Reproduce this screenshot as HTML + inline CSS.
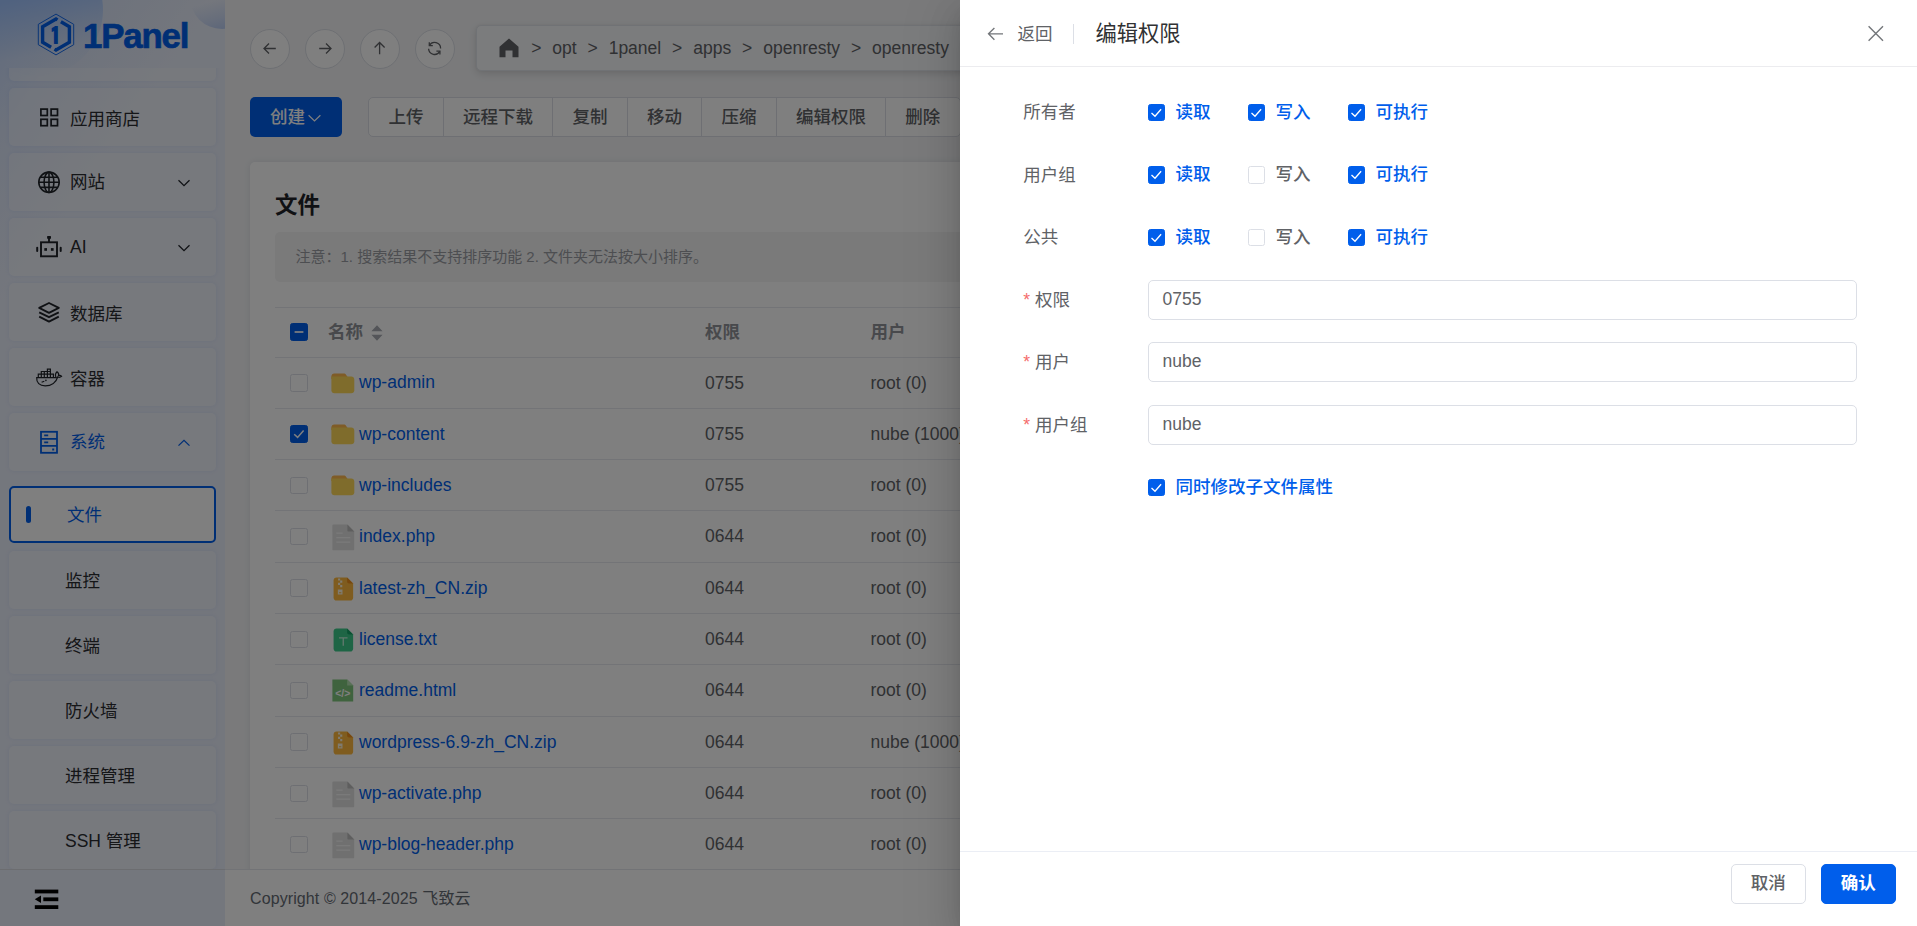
<!DOCTYPE html>
<html lang="zh-CN">
<head>
<meta charset="utf-8">
<title>1Panel - 文件</title>
<style>
*{box-sizing:border-box;}
html,body{margin:0;padding:0;}
body{width:1917px;height:926px;overflow:hidden;position:relative;background:#f4f5f7;
 font-family:"Liberation Sans","Noto Sans CJK SC",sans-serif;font-size:17.5px;color:#303133;}
.abs{position:absolute;}
/* ---------- sidebar ---------- */
#side{position:absolute;left:0;top:0;width:225px;height:926px;overflow:hidden;background:#e9eefa;}
#side .g1{position:absolute;left:-29px;top:-56px;width:132px;height:132px;border-radius:50%;
 background:linear-gradient(168deg,rgba(160,196,255,1) 40%,rgba(178,206,252,.85) 58%,rgba(205,221,250,.5) 78%,rgba(233,238,250,0) 97%);}
#side .g2{position:absolute;left:190px;top:-35px;width:64px;height:64px;border-radius:50%;
 background:linear-gradient(165deg,rgba(233,238,250,0) 52%,rgba(190,208,244,.6) 75%,rgba(168,192,240,.95) 100%);}
#side .g0{position:absolute;left:0;top:0;width:225px;height:300px;
 background:linear-gradient(125deg,rgba(176,204,252,.75) 0,rgba(205,220,248,.5) 22%,rgba(233,238,250,0) 50%);}
#logo{position:absolute;left:0;top:0;width:225px;height:68px;}
#logo .txt{position:absolute;left:82.5px;top:16.4px;font-weight:bold;font-size:35px;line-height:40px;color:#005eeb;
 letter-spacing:-1.2px;transform-origin:0 50%;transform:scaleX(.995);white-space:nowrap;-webkit-text-stroke:.7px #005eeb;}
#logo svg text{font-family:"IPAGothic","Liberation Sans",sans-serif;font-weight:bold;stroke:#005eeb;stroke-width:1.1px;}
#menu{position:absolute;left:0;top:68px;width:225px;height:801px;overflow:hidden;}
.mi{position:absolute;left:9px;width:207px;height:57.5px;border-radius:5px;background:rgba(255,255,255,.27);
 box-shadow:0 0 5px rgba(0,94,235,.08);font-size:17.5px;line-height:58px;color:#2b2d31;white-space:nowrap;}
.mi .ic{position:absolute;left:0;top:0;}
.mi .t{position:absolute;left:61px;top:0;}
.mi.sub .t{left:56px;top:.8px;}
.mi .ar{position:absolute;left:168px;top:24.6px;}
.mi.on{color:#005eeb;}
.mi.act{height:57.3px;background:#fff;border:2px solid #005eeb;color:#005eeb;box-shadow:none;}
.mi.act .t{left:56px;top:-1.6px;}
.mi.act .bar{position:absolute;left:15px;top:18px;width:5px;height:17px;border-radius:3px;background:#005eeb;}
#sfoot{position:absolute;left:0;top:869px;width:225px;height:57px;border-top:1px solid rgba(214,216,222,.9);}
/* ---------- main ---------- */
#main{position:absolute;left:225px;top:0;width:1692px;height:926px;overflow:hidden;}
.navb{position:absolute;top:29px;width:40px;height:40px;border-radius:50%;background:#fff;border:1px solid #dcdfe6;}
.navb svg{position:absolute;left:-1px;top:-1px;}
#crumb{position:absolute;left:251px;top:25px;width:1300px;height:46px;border-radius:5px;background:#f7f8fa;border:1px solid #e1e4ea;
 box-shadow:0 3px 8px rgba(0,0,0,.13),0 0 3px rgba(0,0,0,.05);}
.bc{position:absolute;left:54.2px;top:.5px;height:43.5px;display:flex;gap:10.9px;align-items:center;font-size:17.5px;color:#606266;white-space:nowrap;line-height:43.5px;}
.pbtn{position:absolute;height:40px;border:0;border-radius:5px;background:#005eeb;color:#fff;font:inherit;font-size:17.5px;font-weight:500;padding:0;text-align:center;line-height:40px;}
.bgrp{position:absolute;height:40px;display:flex;white-space:nowrap;}
.bgrp .b{display:block;height:40px;border:1px solid #dcdfe6;background:#fff;color:#606266;font-size:17.5px;font-weight:500;text-align:center;line-height:38px;margin-right:-1px;flex:none;}
.bgrp .b:first-child{border-radius:5px 0 0 5px;}
.bgrp .b:last-child{border-radius:0 5px 5px 0;}
#card{position:absolute;left:25px;top:161.5px;width:1642px;height:760px;background:#fff;border-radius:5px;box-shadow:0 0 7px rgba(0,20,60,.09);}
#card h3{position:absolute;left:25px;top:27px;margin:0;font-size:22.5px;line-height:34px;font-weight:bold;color:#1f2329;}
#alert{position:absolute;left:25px;top:70.5px;width:1592px;height:50px;border-radius:5px;background:#f4f4f5;color:#9a9da3;font-size:15px;line-height:49px;padding-left:20.5px;white-space:nowrap;}
#tbl{position:absolute;left:25px;top:145px;width:1592px;height:640px;border-top:1px solid #e6e8ef;font-size:17.5px;}
.th,.tr{position:absolute;left:0;width:1592px;border-bottom:1px solid #e6e8ef;white-space:nowrap;}
.th{top:0;height:50px;line-height:49px;color:#909399;}
.th b{position:absolute;top:0;font-weight:bold;}
.tr{height:51.33px;line-height:50px;color:#606266;}
.cb{position:absolute;left:15px;top:16.5px;width:17.5px;height:17.5px;border:1px solid #dcdfe6;border-radius:2.5px;background:#fff;}
.th .cb{top:15.5px;}
.cb.on{background:#005eeb;border-color:#005eeb;}
.cb svg{position:absolute;left:-1px;top:-1px;}
.fi{position:absolute;}
.nm{position:absolute;left:84px;top:0;color:#005eeb;}
.c2{position:absolute;left:430px;top:0;}
.c3{position:absolute;left:595.5px;top:0;}
.c4{position:absolute;left:800px;top:0;}
.c5{position:absolute;left:1000px;top:0;}
#foot{position:absolute;left:0;top:869px;width:1692px;height:57px;background:#fff;border-top:1px solid #e4e7ed;padding-left:25px;font-size:16px;line-height:57.6px;color:#646a73;letter-spacing:.1px;white-space:nowrap;}
/* ---------- overlay + drawer ---------- */
#ovl{position:absolute;left:0;top:0;width:1917px;height:926px;background:rgba(0,0,0,.5);}
#drawer{position:absolute;left:960px;top:0;width:957px;height:926px;background:#fff;
 box-shadow:0 16px 48px 16px rgba(0,0,0,.08),0 12px 32px rgba(0,0,0,.12),0 8px 16px -8px rgba(0,0,0,.16);}
#dh{position:absolute;left:0;top:0;width:957px;height:67px;border-bottom:1px solid #ececef;white-space:nowrap;}
#dh .back{position:absolute;left:57.5px;top:14px;font-size:17.5px;line-height:40px;color:#606266;}
#dh .dv{position:absolute;left:113px;top:24px;width:1px;height:20px;background:#dcdfe6;}
#dh .ttl{position:absolute;left:135.5px;top:13.6px;font-size:21.25px;line-height:40px;color:#303133;}
#df{position:absolute;left:0;top:0;width:957px;margin:0;}
.fr{position:absolute;left:0;width:957px;height:40px;line-height:40px;font-size:17.5px;color:#606266;white-space:nowrap;}
.fl{position:absolute;left:63.3px;top:-0.5px;}
.fl i{font-style:normal;color:#f56c6c;margin-right:5px;}
.ck{position:absolute;top:0;height:40px;display:block;color:#606266;font-weight:500;}
.ck .bx{position:absolute;left:0;top:11.5px;width:17px;height:17px;border:1px solid #dcdfe6;border-radius:2.5px;background:#fff;}
.ck .bx svg{position:absolute;left:-1px;top:-1px;}
#df .fr:nth-child(2) .bx{top:11px;height:17.6px;}
.ck .lb{position:absolute;left:27.4px;top:-1px;}
.ck.on{color:#005eeb;}
.ck.on .bx{background:#005eeb;border-color:#005eeb;}
.inp{position:absolute;left:188px;top:0;width:709px;height:40px;border:1px solid #dcdfe6;border-radius:5px;padding-left:13.5px;line-height:36.4px;color:#606266;background:#fff;}
#dfo{position:absolute;left:0;top:851px;width:957px;height:75px;border-top:1px solid #ebeef5;}
.btn{position:absolute;left:771px;top:11.7px;width:74.5px;height:40px;border:1px solid #dcdfe6;border-radius:5px;background:#fff;color:#606266;font-size:17.5px;font-weight:500;text-align:center;line-height:37px;}
.btn.pri{left:861px;background:#005eeb;border-color:#005eeb;color:#fff;font-weight:bold;}
</style>
</head>
<body>
<div id="app">
<!-- ================= SIDEBAR ================= -->
<aside id="side">
 <i class="g0"></i><i class="g1"></i><i class="g2"></i>
 <div id="logo">
  <svg class="abs" style="left:36px;top:12px" width="40" height="45" viewBox="-20 -22.5 40 45">
   <polygon points="0,-20.4 17.7,-10.2 17.7,10.2 0,20.4 -17.7,10.2 -17.7,-10.2" fill="none" stroke="#005eeb" stroke-width="0.9"/>
   <polyline points="1.5,-14.6 0,-15.5 -13.4,-7.75 -13.4,7.75 -4.9,12.7" fill="none" stroke="#005eeb" stroke-width="3.4" stroke-linejoin="miter"/>
   <polyline points="-1.5,14.6 0,15.5 13.4,7.75 13.4,-7.75 4.9,-12.7" fill="none" stroke="#005eeb" stroke-width="3.4" stroke-linejoin="miter"/>
   <text x="-0.6" y="9.3" text-anchor="middle" font-size="22" fill="#005eeb">1</text>
  </svg>
  <div class="txt">1Panel</div>
 </div>
 <nav id="menu">
  <div class="mi" style="top:-45px"></div>
  <div class="mi" style="top:20px">
   <svg class="ic" width="70" height="58" viewBox="0 0 70 58"><g fill="none" stroke="#1f2329" stroke-width="1.7">
    <rect x="31.9" y="21.1" width="6.4" height="6.4"/><rect x="42.1" y="21.1" width="6.4" height="6.4"/>
    <rect x="31.9" y="31.3" width="6.4" height="6.4"/><rect x="42.1" y="31.3" width="6.4" height="6.4"/></g></svg>
   <span class="t" style="top:1.6px">应用商店</span></div>
  <div class="mi" style="top:85px">
   <svg class="ic" width="70" height="58" viewBox="0 0 70 58"><g fill="none" stroke="#1f2329" stroke-width="1.6">
    <circle cx="40" cy="29.3" r="10.2"/><ellipse cx="40" cy="29.3" rx="4.9" ry="10.2"/>
    <path d="M40 19.1V39.5M29.8 29.3H50.2M31.3 24.2H48.7M31.3 34.4H48.7"/></g></svg>
   <span class="t">网站</span>
   <svg class="ar" width="14" height="10" viewBox="0 0 14 10"><path d="M1.5 2.3L7 7.6L12.5 2.3" fill="none" stroke="#1f2329" stroke-width="1.3"/></svg></div>
  <div class="mi" style="top:150px">
   <svg class="ic" width="70" height="58" viewBox="0 0 70 58"><g fill="none" stroke="#1f2329" stroke-width="1.9">
    <rect x="32.0" y="24.3" width="16" height="14"/><path d="M40 24.3V19.8"/></g>
    <g fill="#1f2329"><rect x="38.1" y="18.1" width="3.9" height="2.7" rx=".6"/><rect x="27.2" y="28.8" width="2" height="5.2" rx="1"/><rect x="50.7" y="28.8" width="2" height="5.2" rx="1"/>
    <rect x="35.3" y="30.1" width="2.7" height="2.7"/><rect x="41.9" y="30.1" width="2.7" height="2.7"/></g></svg>
   <span class="t">AI</span>
   <svg class="ar" width="14" height="10" viewBox="0 0 14 10"><path d="M1.5 2.3L7 7.6L12.5 2.3" fill="none" stroke="#1f2329" stroke-width="1.3"/></svg></div>
  <div class="mi" style="top:215px">
   <svg class="ic" width="70" height="58" viewBox="0 0 70 58"><g fill="none" stroke="#1f2329" stroke-width="1.9" stroke-linejoin="round">
    <path d="M40 20L49.8 24.9L40 29.8L30.2 24.9Z"/><path d="M30.2 29.3L40 34.2L49.8 29.3"/><path d="M30.2 33.7L40 38.6L49.8 33.7"/></g></svg>
   <span class="t" style="top:1.6px">数据库</span></div>
  <div class="mi" style="top:280px">
   <svg class="ic" width="70" height="58" viewBox="0 0 70 58"><g fill="none" stroke="#1f2329" stroke-width="1.2">
    <path d="M27.7 29.6H47.1C46.1 27.6 46.5 25.1 48 23.7C49.5 24.8 50 26.3 49.5 27.6C50.5 27.1 51.9 27.4 52.6 28.3C51.6 29.2 50 29.5 48.7 29C47.2 34.4 42.4 37.9 36.2 37.9C30.6 37.9 27.3 34.6 27.7 29.6Z"/>
    <path d="M29.3 29.4V26.1H44.4V29.4M32.3 29.4V23.5H41.4V29.4M35.3 29.4V23.5M38.4 29.4V21.2H41.4V23.5M32.6 34.3L35.3 33.2"/></g>
    <circle cx="36.9" cy="32.4" r=".8" fill="#1f2329"/></svg>
   <span class="t" style="top:1.6px">容器</span></div>
  <div class="mi on" style="top:345px">
   <svg class="ic" width="70" height="58" viewBox="0 0 70 58"><g fill="none" stroke="#005eeb" stroke-width="1.8">
    <rect x="32" y="18.8" width="16" height="21"/><path d="M32 25.8H48M32 32.8H48M35.2 22.4H39.2M35.2 29.4H39.2"/></g>
    <rect x="43.2" y="35.5" width="2" height="2" fill="#005eeb"/></svg>
   <span class="t">系统</span>
   <svg class="ar" width="14" height="10" viewBox="0 0 14 10"><path d="M1.5 7.6L7 2.3L12.5 7.6" fill="none" stroke="#005eeb" stroke-width="1.3"/></svg></div>
  <div class="mi sub act" style="top:418px"><i class="bar"></i><span class="t">文件</span></div>
  <div class="mi sub" style="top:483px"><span class="t">监控</span></div>
  <div class="mi sub" style="top:548px"><span class="t">终端</span></div>
  <div class="mi sub" style="top:613px"><span class="t">防火墙</span></div>
  <div class="mi sub" style="top:678px"><span class="t">进程管理</span></div>
  <div class="mi sub" style="top:743px"><span class="t">SSH 管理</span></div>
 </nav>
 <div id="sfoot">
  <svg class="abs" style="left:34px;top:19.2px" width="26" height="22" viewBox="0 0 26 22"><g fill="#000">
   <rect x="0.8" y="0.6" width="23.5" height="3.8"/><rect x="9.3" y="8.4" width="15" height="3.8"/><rect x="0.8" y="16.2" width="23.5" height="3.8"/>
   <path d="M0.8 10.3L7 6.6V14Z"/></g></svg>
 </div>
</aside>
<!-- ================= MAIN ================= -->
<main id="main">
 <div class="navb" style="left:25px"><svg width="40" height="40" viewBox="0 0 40 40"><path d="M25.8 19.5H14.1M19 14.5L14 19.5L19 24.5" fill="none" stroke="#606266" stroke-width="1.3"/></svg></div>
 <div class="navb" style="left:80px"><svg width="40" height="40" viewBox="0 0 40 40"><path d="M14.2 19.5H25.9M21 14.5L26 19.5L21 24.5" fill="none" stroke="#606266" stroke-width="1.3"/></svg></div>
 <div class="navb" style="left:135px"><svg width="40" height="40" viewBox="0 0 40 40"><path d="M19.6 25.3V13.6M14.6 18.5L19.6 13.5L24.6 18.5" fill="none" stroke="#606266" stroke-width="1.3"/></svg></div>
 <div class="navb" style="left:190px"><svg width="40" height="40" viewBox="0 0 40 40"><g fill="none" stroke="#606266" stroke-width="1.3"><path d="M14.4 16.4A6 6 0 0 1 25.6 19.4M13.6 19.8A6 6 0 0 0 24.8 22.4"/><path d="M14.3 13.2V16.7H17.8M24.9 25.6V22.1H21.4"/></g></svg></div>
 <div id="crumb">
  <svg class="abs" style="left:21px;top:11px" width="22" height="22" viewBox="0 0 22 22"><path d="M11 1.4L20.5 9.8V20.2H14.5V13.6H7.5V20.2H1.5V9.8Z" fill="#606266"/></svg>
  <div class="bc"><span>&gt;</span><span>opt</span><span>&gt;</span><span>1panel</span><span>&gt;</span><span>apps</span><span>&gt;</span><span>openresty</span><span>&gt;</span><span>openresty</span><span>&gt;</span><span>www</span><span>&gt;</span><span>sites</span><span>&gt;</span><span>nube.blog</span><span>&gt;</span><span>index</span></div>
 </div>
 <button class="pbtn" style="left:25px;top:97px;width:92px">创建<svg width="15" height="12" viewBox="0 0 15 12" style="margin-left:2px;vertical-align:-1px"><path d="M1.6 3.2L7.5 8.9L13.4 3.2" fill="none" stroke="#fff" stroke-width="1.2"/></svg></button>
 <div class="bgrp" style="left:143px;top:97px">
  <span class="b" style="width:76px">上传</span><span class="b" style="width:110px">远程下载</span><span class="b" style="width:76px">复制</span><span class="b" style="width:75px">移动</span><span class="b" style="width:76px">压缩</span><span class="b" style="width:110px">编辑权限</span><span class="b" style="width:75.5px">删除</span>
 </div>
 <section id="card">
  <h3>文件</h3>
  <div id="alert">注意：1. 搜索结果不支持排序功能 2. 文件夹无法按大小排序。</div>
  <div id="tbl">
   <div class="th"><span class="cb on"><svg width="18" height="18" viewBox="0 0 18 18"><path d="M4.6 9H13.4" stroke="#fff" stroke-width="1.7"/></svg></span>
    <b style="left:53px">名称</b><svg class="abs" style="left:95px;top:16px" width="14" height="18" viewBox="0 0 14 18"><path d="M7 1.2L12.6 7.2H1.4Z M7 16.8L12.6 10.8H1.4Z" fill="#a8abb2"/></svg>
    <b style="left:430px">权限</b><b style="left:595.5px">用户</b><b style="left:800px">用户组</b><b style="left:1000px">大小</b></div>
 <div class="tr" style="top:50.00px"><span class="cb"></span><svg class="fi fd" style="left:56px;top:15px" width="24" height="21" viewBox="0 0 24 21"><path d="M0.4 6V3.4C0.4 1.8 1.6 0.6 3.2 0.6H12.6C13.8 0.6 14.6 1.1 15.2 2L17 4.6V6Z" fill="#ffb84e"/><path d="M0.4 3.6H20.3C22 3.6 23.3 4.9 23.3 6.6V17.3C23.3 19 22 20.3 20.3 20.3H3.4C1.7 20.3 0.4 19 0.4 17.3Z" fill="#ffd858"/></svg><a class="nm" style="top:-1px">wp-admin</a><span class="c2">0755</span><span class="c3">root (0)</span><span class="c4">root (0)</span><span class="c5">-</span></div>
 <div class="tr" style="top:101.33px"><span class="cb on"><svg width="18" height="18" viewBox="0 0 18 18"><path d="M4.2 9.3L7.6 12.4L13.6 5.6" fill="none" stroke="#fff" stroke-width="1.5"/></svg></span><svg class="fi fd" style="left:56px;top:15px" width="24" height="21" viewBox="0 0 24 21"><path d="M0.4 6V3.4C0.4 1.8 1.6 0.6 3.2 0.6H12.6C13.8 0.6 14.6 1.1 15.2 2L17 4.6V6Z" fill="#ffb84e"/><path d="M0.4 3.6H20.3C22 3.6 23.3 4.9 23.3 6.6V17.3C23.3 19 22 20.3 20.3 20.3H3.4C1.7 20.3 0.4 19 0.4 17.3Z" fill="#ffd858"/></svg><a class="nm">wp-content</a><span class="c2">0755</span><span class="c3">nube (1000)</span><span class="c4">nube (1000)</span><span class="c5">-</span></div>
 <div class="tr" style="top:152.66px"><span class="cb"></span><svg class="fi fd" style="left:56px;top:15px" width="24" height="21" viewBox="0 0 24 21"><path d="M0.4 6V3.4C0.4 1.8 1.6 0.6 3.2 0.6H12.6C13.8 0.6 14.6 1.1 15.2 2L17 4.6V6Z" fill="#ffb84e"/><path d="M0.4 3.6H20.3C22 3.6 23.3 4.9 23.3 6.6V17.3C23.3 19 22 20.3 20.3 20.3H3.4C1.7 20.3 0.4 19 0.4 17.3Z" fill="#ffd858"/></svg><a class="nm">wp-includes</a><span class="c2">0755</span><span class="c3">root (0)</span><span class="c4">root (0)</span><span class="c5">-</span></div>
 <div class="tr" style="top:203.99px"><span class="cb"></span><svg class="fi" style="left:56.8px;top:12.4px" width="23" height="27" viewBox="0 0 23 27"><path d="M1.2 0.6H15.4L22.2 7.4V25.4C22.2 25.9 21.8 26.3 21.3 26.3H1.2C0.7 26.3 0.4 25.9 0.4 25.4V1.4C0.4 0.9 0.7 0.6 1.2 0.6Z" fill="#e0e0e0"/><path d="M15.4 0.6L22.2 7.4H16.4C15.8 7.4 15.4 7 15.4 6.4Z" fill="#bdbdbd"/><path d="M4.3 8.6H10.6V9.8H4.3ZM4.3 13.1H18.3V14.3H4.3ZM4.3 17.6H18.3V18.8H4.3Z" fill="#f5f5f5"/></svg><a class="nm">index.php</a><span class="c2">0644</span><span class="c3">root (0)</span><span class="c4">root (0)</span><span class="c5">-</span></div>
 <div class="tr" style="top:255.32px"><span class="cb"></span><svg class="fi" style="left:57.7px;top:14px" width="21.3" height="24" viewBox="0 0 22 24" preserveAspectRatio="none"><path d="M3.6 0.4H14.6L20.8 6.4V20.4C20.8 22.2 19.6 23.6 17.8 23.6H3.6C1.8 23.6 0.6 22.2 0.6 20.4V3.4C0.6 1.6 1.8 0.4 3.6 0.4Z" fill="#ffb93e"/><path d="M14.6 0.4L20.8 6.4H16.6C15.4 6.4 14.6 5.6 14.6 4.4Z" fill="#ef8f1c"/><path d="M5.2 1.4H7.4V3.6H5.2ZM7.4 3.6H9.6V5.8H7.4ZM5.2 5.8H7.4V8H5.2ZM7.4 8H9.6V10.2H7.4ZM5 12.6H9.8V17.4H5ZM6.2 15.2V16.2H8.6V15.2Z" fill="#fff6e0" fill-rule="evenodd"/></svg><a class="nm">latest-zh_CN.zip</a><span class="c2">0644</span><span class="c3">root (0)</span><span class="c4">root (0)</span><span class="c5">-</span></div>
 <div class="tr" style="top:306.65px"><span class="cb"></span><svg class="fi" style="left:57.7px;top:14px" width="21.3" height="24" viewBox="0 0 22 24" preserveAspectRatio="none"><path d="M3.6 0.4H14.6L20.8 6.4V20.4C20.8 22.2 19.6 23.6 17.8 23.6H3.6C1.8 23.6 0.6 22.2 0.6 20.4V3.4C0.6 1.6 1.8 0.4 3.6 0.4Z" fill="#3ccb8b"/><path d="M14.6 0.4L20.8 6.4H16.6C15.4 6.4 14.6 5.6 14.6 4.4Z" fill="#15a266"/><path d="M6.2 9.2H15V10.5H11.3V17.8H9.9V10.5H6.2Z" fill="#bff0d9"/></svg><a class="nm">license.txt</a><span class="c2">0644</span><span class="c3">root (0)</span><span class="c4">root (0)</span><span class="c5">-</span></div>
 <div class="tr" style="top:357.98px"><span class="cb"></span><svg class="fi" style="left:57.3px;top:14px" width="22" height="23" viewBox="0 0 22 23"><path d="M0.4 0.4H15.2L21.2 6.4V22.6H0.4Z" fill="#7fc67c"/><path d="M15.2 0.4L21.2 6.4H15.2Z" fill="#b5e3b2"/><text x="10.8" y="17.6" text-anchor="middle" font-family="Liberation Sans, sans-serif" font-weight="bold" font-size="10.5" fill="#ffffff" style="font-family:'Liberation Sans',sans-serif;font-weight:bold">&lt;/&gt;</text></svg><a class="nm">readme.html</a><span class="c2">0644</span><span class="c3">root (0)</span><span class="c4">root (0)</span><span class="c5">-</span></div>
 <div class="tr" style="top:409.31px"><span class="cb"></span><svg class="fi" style="left:57.7px;top:14px" width="21.3" height="24" viewBox="0 0 22 24" preserveAspectRatio="none"><path d="M3.6 0.4H14.6L20.8 6.4V20.4C20.8 22.2 19.6 23.6 17.8 23.6H3.6C1.8 23.6 0.6 22.2 0.6 20.4V3.4C0.6 1.6 1.8 0.4 3.6 0.4Z" fill="#ffb93e"/><path d="M14.6 0.4L20.8 6.4H16.6C15.4 6.4 14.6 5.6 14.6 4.4Z" fill="#ef8f1c"/><path d="M5.2 1.4H7.4V3.6H5.2ZM7.4 3.6H9.6V5.8H7.4ZM5.2 5.8H7.4V8H5.2ZM7.4 8H9.6V10.2H7.4ZM5 12.6H9.8V17.4H5ZM6.2 15.2V16.2H8.6V15.2Z" fill="#fff6e0" fill-rule="evenodd"/></svg><a class="nm">wordpress-6.9-zh_CN.zip</a><span class="c2">0644</span><span class="c3">nube (1000)</span><span class="c4">nube (1000)</span><span class="c5">-</span></div>
 <div class="tr" style="top:460.64px"><span class="cb"></span><svg class="fi" style="left:56.8px;top:12.4px" width="23" height="27" viewBox="0 0 23 27"><path d="M1.2 0.6H15.4L22.2 7.4V25.4C22.2 25.9 21.8 26.3 21.3 26.3H1.2C0.7 26.3 0.4 25.9 0.4 25.4V1.4C0.4 0.9 0.7 0.6 1.2 0.6Z" fill="#e0e0e0"/><path d="M15.4 0.6L22.2 7.4H16.4C15.8 7.4 15.4 7 15.4 6.4Z" fill="#bdbdbd"/><path d="M4.3 8.6H10.6V9.8H4.3ZM4.3 13.1H18.3V14.3H4.3ZM4.3 17.6H18.3V18.8H4.3Z" fill="#f5f5f5"/></svg><a class="nm">wp-activate.php</a><span class="c2">0644</span><span class="c3">root (0)</span><span class="c4">root (0)</span><span class="c5">-</span></div>
 <div class="tr" style="top:511.97px"><span class="cb"></span><svg class="fi" style="left:56.8px;top:12.4px" width="23" height="27" viewBox="0 0 23 27"><path d="M1.2 0.6H15.4L22.2 7.4V25.4C22.2 25.9 21.8 26.3 21.3 26.3H1.2C0.7 26.3 0.4 25.9 0.4 25.4V1.4C0.4 0.9 0.7 0.6 1.2 0.6Z" fill="#e0e0e0"/><path d="M15.4 0.6L22.2 7.4H16.4C15.8 7.4 15.4 7 15.4 6.4Z" fill="#bdbdbd"/><path d="M4.3 8.6H10.6V9.8H4.3ZM4.3 13.1H18.3V14.3H4.3ZM4.3 17.6H18.3V18.8H4.3Z" fill="#f5f5f5"/></svg><a class="nm">wp-blog-header.php</a><span class="c2">0644</span><span class="c3">root (0)</span><span class="c4">root (0)</span><span class="c5">-</span></div>
 <div class="tr" style="top:563.30px"><span class="cb"></span><svg class="fi" style="left:56.8px;top:12.4px" width="23" height="27" viewBox="0 0 23 27"><path d="M1.2 0.6H15.4L22.2 7.4V25.4C22.2 25.9 21.8 26.3 21.3 26.3H1.2C0.7 26.3 0.4 25.9 0.4 25.4V1.4C0.4 0.9 0.7 0.6 1.2 0.6Z" fill="#e0e0e0"/><path d="M15.4 0.6L22.2 7.4H16.4C15.8 7.4 15.4 7 15.4 6.4Z" fill="#bdbdbd"/><path d="M4.3 8.6H10.6V9.8H4.3ZM4.3 13.1H18.3V14.3H4.3ZM4.3 17.6H18.3V18.8H4.3Z" fill="#f5f5f5"/></svg><a class="nm">wp-comments-post.php</a><span class="c2">0644</span><span class="c3">root (0)</span><span class="c4">root (0)</span><span class="c5">-</span></div>
  </div>
 </section>
 <footer id="foot">Copyright © 2014-2025 <span>飞致云</span></footer>
</main>

</div>
<!-- ================= OVERLAY + DRAWER ================= -->
<div id="ovl"></div>
<div id="drawer">
 <header id="dh">
  <svg class="abs" style="left:26px;top:25px" width="20" height="18" viewBox="0 0 20 18"><path d="M17 8.8H2.6M8.4 2.9L2.5 8.8L8.4 14.7" fill="none" stroke="#73767a" stroke-width="1.35"/></svg>
  <span class="back">返回</span><i class="dv"></i><span class="ttl">编辑权限</span>
  <svg class="abs" style="left:906px;top:24px" width="20" height="20" viewBox="0 0 20 20"><path d="M2.6 2.3L17 16.7M17 2.3L2.6 16.7" fill="none" stroke="#73767a" stroke-width="1.4"/></svg>
 </header>
 <form id="df">
  <div class="fr" style="top:92.5px"><span class="fl">所有者</span><label class="ck on" style="left:188px"><span class="bx"><svg width="18" height="18" viewBox="0 0 18 18"><path d="M3.5 9L7 12.2L13.1 5.3" fill="none" stroke="#fff" stroke-width="1.3"/></svg></span><span class="lb">读取</span></label><label class="ck on" style="left:288px"><span class="bx"><svg width="18" height="18" viewBox="0 0 18 18"><path d="M3.5 9L7 12.2L13.1 5.3" fill="none" stroke="#fff" stroke-width="1.3"/></svg></span><span class="lb">写入</span></label><label class="ck on" style="left:388px"><span class="bx"><svg width="18" height="18" viewBox="0 0 18 18"><path d="M3.5 9L7 12.2L13.1 5.3" fill="none" stroke="#fff" stroke-width="1.3"/></svg></span><span class="lb">可执行</span></label></div>
  <div class="fr" style="top:155.0px"><span class="fl">用户组</span><label class="ck on" style="left:188px"><span class="bx"><svg width="18" height="18" viewBox="0 0 18 18"><path d="M3.5 9L7 12.2L13.1 5.3" fill="none" stroke="#fff" stroke-width="1.3"/></svg></span><span class="lb">读取</span></label><label class="ck" style="left:288px"><span class="bx"></span><span class="lb">写入</span></label><label class="ck on" style="left:388px"><span class="bx"><svg width="18" height="18" viewBox="0 0 18 18"><path d="M3.5 9L7 12.2L13.1 5.3" fill="none" stroke="#fff" stroke-width="1.3"/></svg></span><span class="lb">可执行</span></label></div>
  <div class="fr" style="top:217.5px"><span class="fl">公共</span><label class="ck on" style="left:188px"><span class="bx"><svg width="18" height="18" viewBox="0 0 18 18"><path d="M3.5 9L7 12.2L13.1 5.3" fill="none" stroke="#fff" stroke-width="1.3"/></svg></span><span class="lb">读取</span></label><label class="ck" style="left:288px"><span class="bx"></span><span class="lb">写入</span></label><label class="ck on" style="left:388px"><span class="bx"><svg width="18" height="18" viewBox="0 0 18 18"><path d="M3.5 9L7 12.2L13.1 5.3" fill="none" stroke="#fff" stroke-width="1.3"/></svg></span><span class="lb">可执行</span></label></div>
  <div class="fr" style="top:280.0px"><span class="fl"><i>*</i>权限</span><span class="inp">0755</span></div>
  <div class="fr" style="top:342px"><span class="fl"><i>*</i>用户</span><span class="inp">nube</span></div>
  <div class="fr" style="top:405.0px"><span class="fl"><i>*</i>用户组</span><span class="inp">nube</span></div>
  <div class="fr" style="top:467.5px"><label class="ck on" style="left:188px"><span class="bx"><svg width="18" height="18" viewBox="0 0 18 18"><path d="M3.5 9L7 12.2L13.1 5.3" fill="none" stroke="#fff" stroke-width="1.3"/></svg></span><span class="lb">同时修改子文件属性</span></label></div>
 </form>
 <footer id="dfo"><span class="btn">取消</span><span class="btn pri">确认</span></footer>
</div>

</body>
</html>
